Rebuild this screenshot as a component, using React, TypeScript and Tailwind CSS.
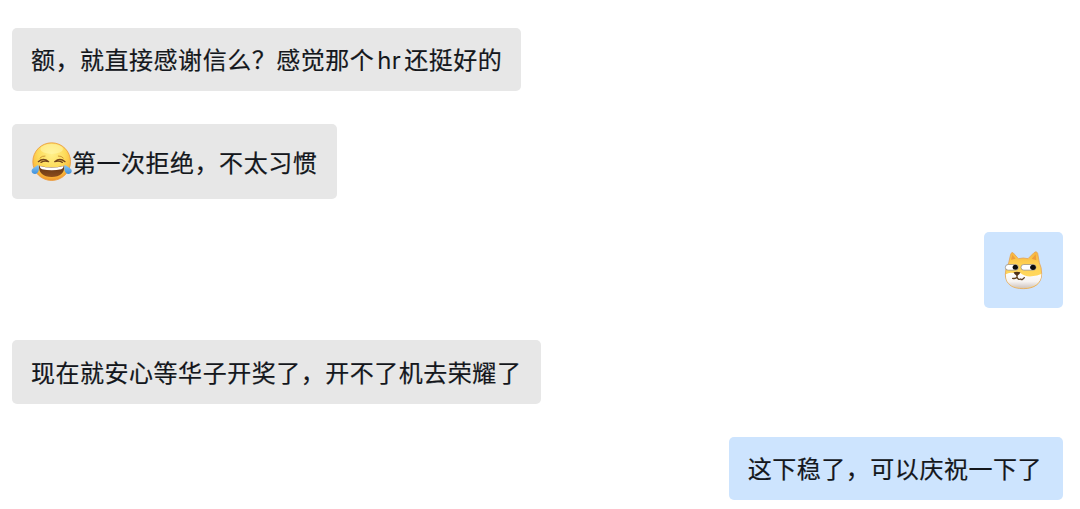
import type { ReactNode } from 'react';
import clsx from 'clsx';

interface BubbleProps {
	mine?: boolean;
	tall?: boolean;
	className?: string;
	children: ReactNode;
}

const JoyEmoji: React.FC = () => (
	<svg viewBox="33 18 123 123" className="w-[41px] h-[41px] shrink-0">
		<defs>
			<radialGradient id="joyFace" cx="0.5" cy="0.3" r="0.7">
				<stop offset="0" stopColor="#fff08a" />
				<stop offset="0.5" stopColor="#fddc5c" />
				<stop offset="0.82" stopColor="#fbbb3c" />
				<stop offset="1" stopColor="#ee9329" />
			</radialGradient>
			<linearGradient id="joyMouth" x1="0" y1="0" x2="0" y2="1">
				<stop offset="0" stopColor="#5f3213" />
				<stop offset="1" stopColor="#8d4d1c" />
			</linearGradient>
			<linearGradient id="joyTear" x1="0" y1="0" x2="0" y2="1">
				<stop offset="0" stopColor="#8fc9f3" />
				<stop offset="1" stopColor="#3c8fdc" />
			</linearGradient>
		</defs>
		<circle cx="95" cy="80" r="56.5" fill="url(#joyFace)" stroke="#eb9a3c" strokeWidth="2.5" />
		<ellipse cx="95" cy="42" rx="34" ry="15" fill="#fff9b4" opacity="0.5" />
		<path d="M60 69Q66 62 75 63M115 63Q124 62 130 69" fill="none" stroke="#d09a35" strokeWidth="3" strokeLinecap="round" />
		<path
			d="M55 80Q70 67 86 80Q73 76 63 82M135 80Q120 67 104 80Q117 76 127 82"
			fill="none"
			stroke="#73441b"
			strokeWidth="4"
			strokeLinecap="round"
			strokeLinejoin="round"
		/>
		<path d="M57 92Q95 101 133 92Q134 125 95 126Q56 125 57 92Z" fill="url(#joyMouth)" />
		<path d="M59 93Q95 102 131 93Q131 100 124 103Q95 109 66 103Q59 100 59 93Z" fill="#fff" />
		<path d="M55 89Q60 105 52 114Q46 120 38 115Q32 109 37 102Q42 97 55 89Z" fill="url(#joyTear)" />
		<path d="M134 89Q130 105 138 114Q144 120 152 115Q158 109 153 102Q148 97 134 89Z" fill="url(#joyTear)" />
	</svg>
);

const DogeEmoji: React.FC = () => (
	<svg viewBox="15 12 123 123" className="w-[41px] h-[41px] shrink-0">
		<defs>
			<linearGradient id="dogeFace" x1="0" y1="0" x2="0" y2="1">
				<stop offset="0" stopColor="#f6b43c" />
				<stop offset="0.35" stopColor="#ffd253" />
				<stop offset="1" stopColor="#ffdc68" />
			</linearGradient>
			<linearGradient id="dogeMuzzle" x1="0" y1="0" x2="0" y2="1">
				<stop offset="0" stopColor="#fff" />
				<stop offset="0.6" stopColor="#f6f3f1" />
				<stop offset="1" stopColor="#cfc4bf" />
			</linearGradient>
		</defs>
		<path
			d="M32 54L38 28Q41 19 46 24L61 41Q76 37 90 41L108 23Q116 16 119 25L124 53Q131 67 131 86C131 116 109 131 76 131C43 131 22 118 22 88Q22 67 32 54Z"
			fill="url(#dogeFace)"
			stroke="#e5a45c"
			strokeWidth="2.5"
		/>
		<path d="M39 44L43 29L53 41ZM101 41L113 28L115 46Z" fill="#ee9d3c" />
		<path
			d="M24 88Q32 81 48 84Q57 77 67 84Q82 96 101 94Q119 92 130 87C131 114 109 129 76 129C43 129 22 117 24 88Z"
			fill="url(#dogeMuzzle)"
		/>
		<rect x="22" y="58.5" width="39" height="17" rx="8.5" fill="#fff" stroke="#8b8378" strokeWidth="2" />
		<rect x="69" y="58.5" width="45" height="17" rx="8.5" fill="#fff" stroke="#8b8378" strokeWidth="2" />
		<ellipse cx="52" cy="67" rx="8" ry="7.5" fill="#0c0c0c" />
		<ellipse cx="105" cy="67" rx="8.5" ry="8" fill="#0c0c0c" />
		<path d="M47 82Q57 78 67 82Q66 89 57 93Q48 89 47 82Z" fill="#4d3018" />
		<path
			d="M57 90V96Q54 102 44 100M57 96Q60 106 68 102Q72 107 79 98"
			fill="none"
			stroke="#60401f"
			strokeWidth="4"
			strokeLinecap="round"
			strokeLinejoin="round"
		/>
	</svg>
);

const Bubble: React.FC<BubbleProps> = ({ mine, tall, className, children }) => (
	<div
		className={clsx(
			'flex items-center pl-[19px] rounded-[5px] whitespace-nowrap',
			mine ? 'self-end bg-[#cde4fe]' : 'self-start bg-[#e7e7e7]',
			tall ? 'h-[75.5px]' : 'h-[63.5px]',
			className ?? 'pr-[19px]'
		)}
	>
		{children}
	</div>
);

const Text: React.FC<{ children: ReactNode }> = ({ children }) => (
	<span className="pt-1 [-webkit-text-stroke:0.2px_#14171c]">{children}</span>
);

const App: React.FC = () => {
	return (
		<main className="flex flex-col gap-[32.75px] h-[509px] overflow-hidden bg-white pt-[27.5px] pl-3 pr-[17px] font-['Inter','Noto_Sans_CJK_SC',sans-serif] text-2xl tracking-[0.52px] text-[#14171c]">
			<Bubble>
				<Text>额，就直接感谢信么？感觉那个</Text>
				<span className="w-[30px] pt-1 text-center">hr</span>
				<Text>还挺好的</Text>
			</Bubble>
			<Bubble tall className="pr-5">
				<JoyEmoji />
				<Text>第一次拒绝，不太习惯</Text>
			</Bubble>
			<Bubble mine tall>
				<DogeEmoji />
			</Bubble>
			<Bubble className="pr-5">
				<Text>现在就安心等华子开奖了，开不了机去荣耀了</Text>
			</Bubble>
			<Bubble mine className="pr-[21px]">
				<Text>这下稳了，可以庆祝一下了</Text>
			</Bubble>
		</main>
	);
};

export default App;
